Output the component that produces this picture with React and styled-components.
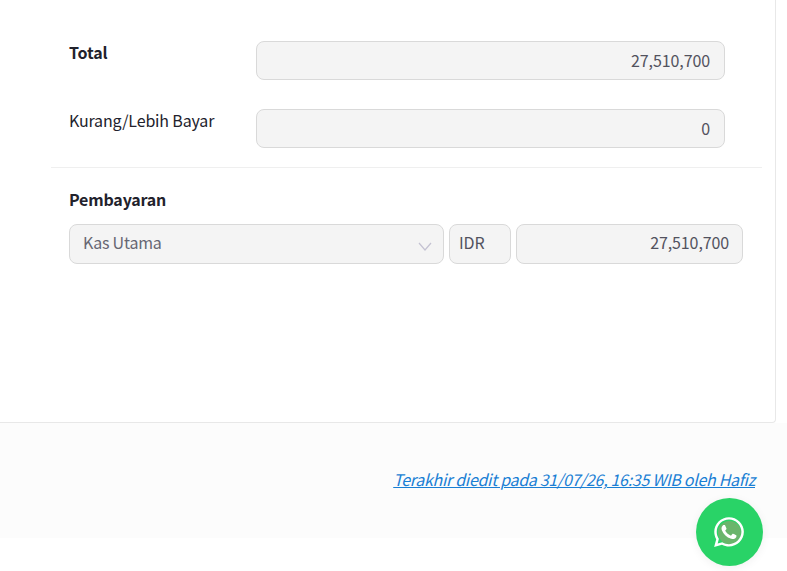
import React from 'react';
import styled, { createGlobalStyle } from 'styled-components';
import { FaWhatsapp } from 'react-icons/fa';

const Global = createGlobalStyle`
  html, body { margin: 0; padding: 0; background: #fff; overflow: hidden; }
  body { font-family: "Noto Sans CJK JP", "Noto Sans", sans-serif; font-size: 16px; color: #1c1c24; }
`;
const Page = styled.div`width: 787px; height: 571px; position: relative; overflow: hidden;`;
const Card = styled.section`
  width: 776px; height: 423px; box-sizing: border-box; padding-top: 41px; background: #fff;
  border-right: 1px solid #e8e8e8; border-bottom: 1px solid #e8e8e8; border-bottom-right-radius: 4px;
`;
const Rows = styled.div`display: flex; flex-direction: column; gap: 29px; margin-left: 69px;`;
const Row = styled.div`display: grid; grid-template-columns: 187px 469px;`;
const Label = styled.div`
  font-size: 16px; line-height: 22px; letter-spacing: -0.16px; font-weight: ${p => (p.$bold ? 700 : 400)}; color: #22222c;
`;
const Field = styled.div`
  box-sizing: border-box; height: ${p => p.$h || 39}px; padding: 0 14px ${p => (p.$h ? 4 : 2)}px; display: flex; align-items: center;
  justify-content: ${p => (p.$left ? 'flex-start' : 'flex-end')};
  background: #f4f4f4; border: 1px solid #d9d9d9; border-radius: 8px;
  font-size: 16px; letter-spacing: -0.1px; color: #52525e; line-height: 24px; position: relative;
`;
const Divider = styled.hr`border: 0; border-top: 1px solid #efefef; margin: 19px 13px 0 51px;`;
const Payment = styled.div`margin: 20px 0 0 69px; width: 674px;`;
const PayTitle = styled.div`font-weight: 700; font-size: 16px; line-height: 22px; letter-spacing: -0.18px; color: #22222c; margin-bottom: 14px;`;
const PayRow = styled.div`display: grid; grid-template-columns: 375px 62px 227px; column-gap: 5px;`;
const SelectField = styled(Field)`
  padding-left: 13px; color: #666672; letter-spacing: -0.2px;
`;
const Chevron = styled.svg`position: absolute; right: 11px; top: 17px; width: 14px; height: 9px;`;
const CurrencyField = styled(Field)`padding-left: 9px;`;
const AmountField = styled(Field)`padding-right: 13px; letter-spacing: -0.12px;`;
const Footer = styled.footer`
  height: 115px; background: #fcfcfc; box-sizing: border-box; padding: 44px 32px 0 0; text-align: right;
`;
const Edited = styled.a`
  color: #1a7fd4; font-style: italic; font-size: 16px; line-height: 24px; letter-spacing: -0.31px; text-decoration: underline;
`;
const WhatsApp = styled.a`
  position: absolute; left: 696px; top: 498px; width: 67px; height: 68px; border-radius: 50%;
  background: #29d367; display: flex; align-items: center; justify-content: center; color: #fff;
  box-shadow: 0 2px 10px rgba(0,0,0,.06); font-size: 34px; padding-right: 1px; box-sizing: border-box;
  &::before {
    content: ""; position: absolute; left: 22px; top: 23px; width: 23px; height: 23px;
    border-radius: 50%; background: #6ab56c;
  }
  svg { position: relative; }
`;

export default function App() {
  return (
    <Page>
      <Global />
      <Card>
        <Rows>
          <Row>
            <Label $bold>Total</Label>
            <Field>27,510,700</Field>
          </Row>
          <Row>
            <Label>Kurang/Lebih Bayar</Label>
            <Field>0</Field>
          </Row>
        </Rows>
        <Divider />
        <Payment>
          <PayTitle>Pembayaran</PayTitle>
          <PayRow>
            <SelectField $left $h={40}>
              Kas Utama
              <Chevron viewBox="0 0 14 9" fill="none" stroke="#c4c2d2" strokeWidth="1.2">
                <path d="M1 1l6 7 6-7" />
              </Chevron>
            </SelectField>
            <CurrencyField $left $h={40}>IDR</CurrencyField>
            <AmountField $h={40}>27,510,700</AmountField>
          </PayRow>
        </Payment>
      </Card>
      <Footer>
        <Edited>Terakhir diedit pada 31/07/26, 16:35 WIB oleh Hafiz</Edited>
      </Footer>
      <WhatsApp aria-label="WhatsApp"><FaWhatsapp /></WhatsApp>
    </Page>
  );
}
